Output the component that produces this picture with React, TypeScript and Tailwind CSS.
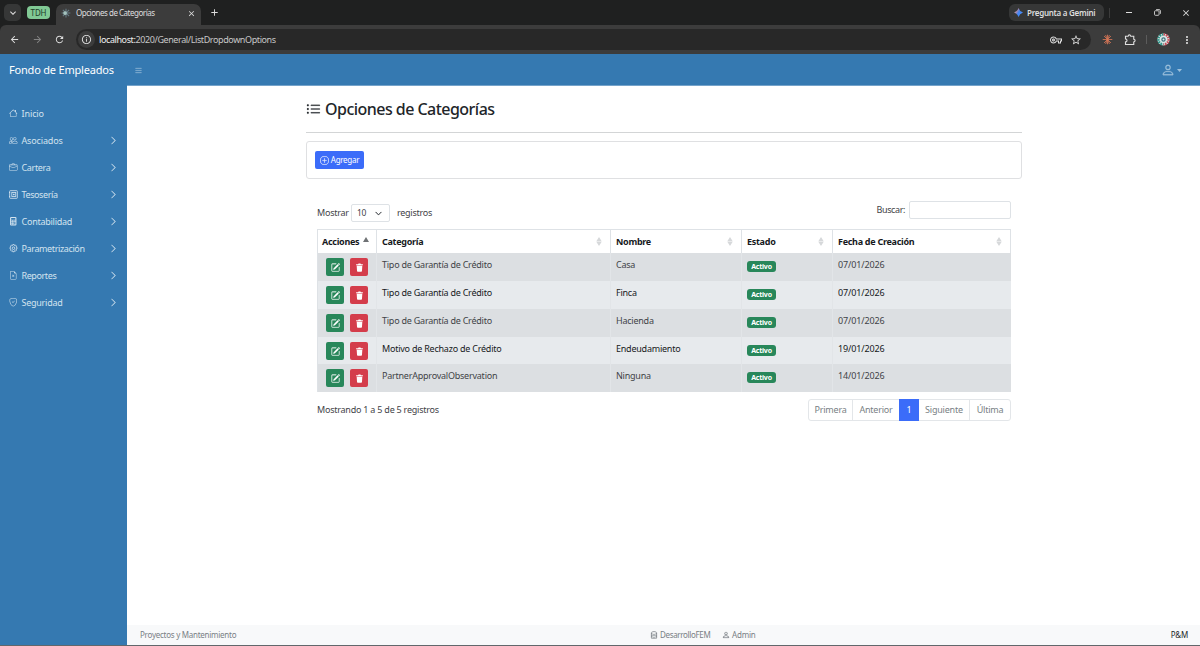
import {
  BsBriefcase,
  BsCalculatorFill,
  BsChevronDown,
  BsChevronRight,
  BsDatabase,
  BsFileEarmarkX,
  BsHouse,
  BsList,
  BsListUl,
  BsPencilSquare,
  BsPeople,
  BsPerson,
  BsPlusCircle,
  BsShieldCheck,
} from "react-icons/bs";
import {
  MdArrowBack,
  MdArrowForward,
  MdClose,
  MdInfoOutline,
  MdKeyboardArrowDown,
  MdMoreVert,
  MdOutlineVpnKey,
  MdRefresh,
  MdStarBorder,
  MdAdd,
} from "react-icons/md";

const SafeIcon = () => (
  <svg viewBox="0 0 16 16" className="size-[9px]" fill="none" stroke="currentColor" strokeWidth="1.5">
    <rect x="1.2" y="1.2" width="13.6" height="13.6" rx="1" />
    <rect x="5" y="4.5" width="7" height="7" />
    <path d="M0 4.5h2M0 11.5h2M8.5 6.5v3M7 8h3" />
  </svg>
);

const GearIcon = () => (
  <svg viewBox="0 0 16 16" className="size-[9px]" fill="none" stroke="currentColor" strokeWidth="1.5">
    <path d="M6.700 1h2.600l.5 1.700 1.700-.8 1.800 1.800-.8 1.700 1.700.6v2.600l-1.700.6.8 1.700-1.800 1.800-1.700-.8-.5 1.900H6.700l-.5-1.900-1.700.8-1.800-1.800.8-1.700L1.800 8.600V6l1.700-.6-.8-1.700 1.800-1.800 1.700.8z" />
    <circle cx="8" cy="7.500" r="2.300" />
  </svg>
);

const TrashIcon = () => (
  <svg viewBox="0 0 16 16" className="size-[9px]" fill="currentColor">
    <path d="M2 2h3.500l.8-1.200h3.400l.8 1.200H14v2H2zM3 5h10l-.6 9.200q-.1 1.300-1.400 1.300H5q-1.300 0-1.400-1.300z" />
  </svg>
);

const menu = [
  { label: "Inicio", icon: <BsHouse />, tracking: "tracking-[-0.1px]", leaf: true },
  { label: "Asociados", icon: <BsPeople />, tracking: "tracking-[-0.15px]" },
  { label: "Cartera", icon: <BsBriefcase />, tracking: "tracking-[-0.35px]" },
  { label: "Tesosería", icon: <SafeIcon />, tracking: "tracking-[-0.4px]" },
  { label: "Contabilidad", icon: <BsCalculatorFill />, tracking: "tracking-[-0.25px]" },
  { label: "Parametrización", icon: <GearIcon />, tracking: "tracking-[-0.38px]" },
  { label: "Reportes", icon: <BsFileEarmarkX />, tracking: "tracking-[-0.4px]" },
  { label: "Seguridad", icon: <BsShieldCheck />, tracking: "tracking-[-0.25px]" },
];

const rows = [
  { category: "Tipo de Garantía de Crédito", name: "Casa", date: "07/01/2026", style: "h-[28px] bg-[#dcdfe2] text-[#3f4347]" },
  { category: "Tipo de Garantía de Crédito", name: "Finca", date: "07/01/2026", style: "h-[28px] bg-[#e7eaed] text-[#16191c]" },
  { category: "Tipo de Garantía de Crédito", name: "Hacienda", date: "07/01/2026", style: "h-[28px] bg-[#dcdfe2] text-[#3f4347]" },
  { category: "Motivo de Rechazo de Crédito", name: "Endeudamiento", date: "19/01/2026", style: "h-[27px] bg-[#e7eaed] text-[#16191c]" },
  { category: "PartnerApprovalObservation", name: "Ninguna", date: "14/01/2026", style: "h-[28px] bg-[#dcdfe2] text-[#3f4347]" },
];

const columns = "grid grid-cols-[59px_234px_131px_91px_178px]";

function BrowserBar() {
  return (
    <div className="h-[54px] shrink-0 bg-[#1f2020] text-[#dedede]">
      <div className="flex h-[25px] items-center">
        <div className="ml-1 flex size-[17px] items-center justify-center rounded-[5px] bg-[#363737]">
          <MdKeyboardArrowDown className="size-[12px]" />
        </div>
        <div className="ml-[6px] flex h-[13px] w-[23px] items-center justify-center rounded-[4px] bg-[#81c995] text-[8px] tracking-[-0.1px] text-[#20402a]">
          TDH
        </div>
        <div className="ml-[6px] flex h-[21px] w-[145px] items-center self-end rounded-t-[7px] bg-[#3c3c3c] pb-[3px] pl-[5px]">
          <svg viewBox="0 0 16 16" className="size-[10px]" stroke="#657b84" strokeWidth="1.7">
            <path d="M8 1v14M1 8h14M3 3l10 10M13 3 3 13" />
            <circle cx="6.500" cy="8" r="3" fill="#a4c2bd" stroke="none" />
          </svg>
          <span className="ml-[5px] w-[100px] whitespace-nowrap text-[8px] tracking-[-0.48px]">Opciones de Categorías</span>
          <MdClose className="ml-[11px] size-[9px]" />
        </div>
        <MdAdd className="ml-[8px] size-[11px]" />
        <div className="ml-auto flex h-[17px] w-[95px] items-center rounded-[6px] bg-[#363737] pl-[5px] text-[8px] font-semibold">
          <svg viewBox="0 0 16 16" className="mr-[4px] size-[9px]">
            <defs>
              <linearGradient id="spark" x1="0" y1="0" x2="1" y2="0.6">
                <stop offset="0" stopColor="#63a772" />
                <stop offset="0.35" stopColor="#b68ba4" />
                <stop offset="0.6" stopColor="#4285f4" />
                <stop offset="1" stopColor="#4c8df6" />
              </linearGradient>
            </defs>
            <path fill="url(#spark)" d="M8 0q1.800 6.200 8 8-6.200 1.800-8 8-1.800-6.200-8-8 6.200-1.800 8-8" />
          </svg>
          <span className="whitespace-nowrap tracking-[-0.26px]">Pregunta a Gemini</span>
        </div>
        <div className="ml-[5px] h-[10px] w-px bg-[#3c3c3c]" />
        <div className="ml-[16px] h-px w-[6px] bg-[#dedede]" />
        <svg viewBox="0 0 8 8" className="ml-[22px] size-[7px]" fill="none" stroke="currentColor">
          <rect x="0.600" y="2" width="5.200" height="5.200" rx="1" />
          <path d="M2.400.7h3.400q1.500 0 1.500 1.500v3.300" />
        </svg>
        <MdClose className="ml-[20px] mr-[9px] size-[10px]" />
      </div>
      <div className="flex h-[29px] items-center rounded-t-[6px] bg-[#3c3c3c]">
        <MdArrowBack className="ml-[9px] size-[11px]" />
        <MdArrowForward className="ml-[12px] size-[11px] text-[#838383]" />
        <MdRefresh className="ml-[11px] size-[11px]" />
        <div className="ml-[11px] flex h-[21px] w-[1015px] items-center rounded-full bg-[#282828] pl-[2px]">
          <div className="flex size-[17px] items-center justify-center rounded-full bg-[#3c3c3c]">
            <MdInfoOutline className="size-[11px]" />
          </div>
          <span className="ml-[4px] whitespace-nowrap text-[9px] tracking-[-0.4px] text-[#c7c7c7]">
            <span className="text-[#f0f0f0]">localhost:</span>2020/General/ListDropdownOptions
          </span>
          <MdOutlineVpnKey className="ml-auto size-[12px]" />
          <MdStarBorder className="ml-[8px] mr-[9px] size-[12px]" />
        </div>
        <svg viewBox="0 0 16 16" className="ml-[11px] size-[11px]" stroke="#d97757" strokeWidth="1.200">
          <path d="M8 1v14M1 8h14M3 3l10 10M13 3 3 13M5.200 1.500l5.600 13M10.800 1.500l-5.600 13" />
        </svg>
        <svg viewBox="0 0 16 16" className="ml-[11px] size-[12px]" fill="none" stroke="currentColor" strokeWidth="1.500">
          <path d="M2 3h3.500q.2-1.800 1.700-1.800T9 3h4v4q1.800.2 1.800 1.800T13 10.600V14H2v-3.500q2-.3 2-2t-2-2z" />
        </svg>
        <div className="ml-[10px] h-[9px] w-px bg-[#5c5c5c]" />
        <svg viewBox="0 0 16 16" className="ml-[10px] size-[13px]" fill="none">
          <circle cx="8" cy="8" r="7.500" fill="#dce7e6" />
          <path d="M8 1.800a6.200 6.200 0 0 0 0 12.400" stroke="#2c9488" strokeWidth="3" strokeDasharray="2 1" />
          <path d="M8 1.800a6.200 6.200 0 0 1 0 12.400" stroke="#c64d58" strokeWidth="3" strokeDasharray="2 1" />
          <circle cx="8" cy="8" r="2" stroke="#3c7380" strokeWidth="1.500" />
        </svg>
        <MdMoreVert className="ml-[11px] size-[12px]" />
      </div>
    </div>
  );
}

function Sidebar() {
  return (
    <nav className="w-[127px] shrink-0 bg-[#3579b1] pt-[15px] text-[#d3e3ef]">
      {menu.map((item) => (
        <div key={item.label} className="flex h-[27px] items-center px-[9px] text-[9px]">
          <span className="flex w-[12.500px] stroke-[0.4] text-[8.500px]">{item.icon}</span>
          <span className={`whitespace-nowrap ${item.tracking}`}>{item.label}</span>
          {!item.leaf && <BsChevronRight className="ml-auto size-[9px] stroke-[0.5]" />}
        </div>
      ))}
    </nav>
  );
}

function SortMark() {
  return (
    <svg viewBox="0 0 6 10" className="ml-auto mr-[8px] h-[9px] w-[6px]" fill="#d6d8da">
      <path d="M3 0l3 4.600H0zM3 10l3-4.600H0z" />
    </svg>
  );
}

function HeaderCell({ label, first }: { label: string; first?: boolean }) {
  return (
    <div className="flex items-center border-r border-[#dee2e6] pl-[5px] tracking-[-0.28px] first:pl-[4px]">
      {label}
      {first ? (
        <svg viewBox="0 0 6 5" className="mb-[4px] ml-[4px] h-[5px] w-[6px]" fill="#6f7275">
          <path d="M3 0l3 5H0z" />
        </svg>
      ) : (
        <SortMark />
      )}
    </div>
  );
}

function Table() {
  return (
    <div className="mt-[6px] w-[694px] border-l border-[#dee2e6]">
      <div className={`${columns} h-[24px] border-t border-[#dee2e6] text-[9px] font-bold text-[#16191c]`}>
        <HeaderCell label="Acciones" first />
        <HeaderCell label="Categoría" />
        <HeaderCell label="Nombre" />
        <HeaderCell label="Estado" />
        <HeaderCell label="Fecha de Creación" />
      </div>
      {rows.map((row, i) => (
        <div key={i} className={`${columns} ${row.style} text-[9px] leading-[13px] tracking-[-0.23px]`}>
          <div className="flex gap-[6px] border-r border-[#e2e5e8] pl-[8px] pt-[5px] text-white">
            <span className="flex size-[18px] items-center justify-center rounded-[2px] bg-[#28875a]">
              <BsPencilSquare className="size-[9px] stroke-[0.3]" />
            </span>
            <span className="flex size-[18px] items-center justify-center rounded-[2px] bg-[#d43d4b]">
              <TrashIcon />
            </span>
          </div>
          <div className="border-r border-[#e2e5e8] pl-[5px] pt-[5px]">{row.category}</div>
          <div className="border-r border-[#e2e5e8] pl-[5px] pt-[5px]">{row.name}</div>
          <div className="border-r border-[#e2e5e8] pl-[5px] pt-[8px]">
            <span className="flex h-[11px] w-[29px] items-center justify-center rounded-[3px] bg-[#28875a] text-[7px] font-bold text-white">
              Activo
            </span>
          </div>
          <div className="pl-[5px] pt-[5px] tracking-[-0.15px]">{row.date}</div>
        </div>
      ))}
    </div>
  );
}

function Pagination() {
  return (
    <div className="flex h-[22px] rounded-[3px] border border-[#e3e6e9] text-[9px] leading-[20px] tracking-[-0.2px] text-[#797f85]">
      <span className="w-[44px] border-r border-[#e3e6e9] text-center">Primera</span>
      <span className="w-[46px] text-center">Anterior</span>
      <span className="-my-px w-[20px] bg-[#3b6cf9] text-center leading-[22px] text-white">1</span>
      <span className="w-[51px] border-r border-[#e3e6e9] text-center">Siguiente</span>
      <span className="w-[40px] text-center">Última</span>
    </div>
  );
}

export default function App() {
  return (
    <div className="flex h-[646px] w-[1200px] flex-col overflow-hidden bg-white font-['Noto_Sans',sans-serif]">
      <BrowserBar />
      <header className="flex h-[31px] shrink-0 items-center bg-[#3579b1] pb-px text-[#9dc0db]">
        <span className="w-[126px] whitespace-nowrap pl-[9px] pt-[3px] text-[11px] tracking-[-0.2px] text-white">
          Fondo de Empleados
        </span>
        <BsList className="ml-[8px] mt-[2px] size-[9px] stroke-[0.4]" />
        <BsPerson className="ml-auto mt-[2px] size-[14px] stroke-[0.3]" />
        <svg viewBox="0 0 5 3" className="ml-[2px] mr-[18px] mt-[3px] h-[3px] w-[5px]" fill="currentColor">
          <path d="M0 0h5L2.500 3z" />
        </svg>
      </header>

      <div className="flex min-h-0 flex-1">
        <Sidebar />
        <div className="flex flex-1 flex-col border-t border-[#75a3ca]">
          <main className="ml-[179px] w-[716px] flex-1 text-[#3f4347]">
            <div className="flex h-[47px] items-center border-b border-[#d3d5d6] text-[#212529]">
              <BsListUl className="size-[15px] stroke-[0.2]" />
              <h1 className="ml-[4px] whitespace-nowrap text-[16px] font-medium tracking-[-0.53px]">Opciones de Categorías</h1>
            </div>

            <div className="mt-[8px] flex h-[38px] items-center rounded-[3px] border border-[#dfe0e2] pl-[8px]">
              <button className="flex h-[18px] w-[49px] items-center justify-center gap-[2px] rounded-[2px] bg-[#3b6cf9] text-[8px] tracking-[-0.3px] text-white">
                <BsPlusCircle className="size-[9px] stroke-[0.3]" />
                Agregar
              </button>
            </div>

            <div className="px-[11px] pt-[22px] text-[9px] tracking-[-0.23px]">
              <div className="flex h-[22px] items-start">
                <div className="flex items-center pt-[3px]">
                  Mostrar
                  <span className="mx-[7px] ml-[2px] flex h-[18px] w-[39px] items-center justify-between rounded-[2px] border border-[#dee2e6] pl-[5px] pr-[7px] text-[8.500px]">
                    10
                    <BsChevronDown className="size-[7px] stroke-[1]" />
                  </span>
                  registros
                </div>
                <div className="ml-auto flex items-center tracking-[-0.4px]">
                  Buscar:
                  <input className="ml-[4px] h-[18px] w-[102px] rounded-[2px] border border-[#dee2e6]" />
                </div>
              </div>

              <Table />

              <div className="flex items-start justify-between pt-[7px]">
                <span className="leading-[22px]">Mostrando 1 a 5 de 5 registros</span>
                <Pagination />
              </div>
            </div>
          </main>

          <footer className="flex h-[20px] shrink-0 items-center bg-[#f8f9fa] pl-[13px] pr-[12px] text-[8px] text-[#797f85]">
            <span className="w-[510px] tracking-[-0.26px]">Proyectos y Mantenimiento</span>
            <BsDatabase className="size-[8px] stroke-[0.4]" />
            <span className="ml-[2px] w-[62px] tracking-[-0.34px]">DesarrolloFEM</span>
            <BsPerson className="size-[8px] stroke-[0.4]" />
            <span className="ml-[2px] tracking-[-0.2px]">Admin</span>
            <span className="ml-auto text-[#212529] tracking-[-0.2px]">P&amp;M</span>
          </footer>
        </div>
      </div>
      <div className="h-px shrink-0 bg-[#62676b]" />
    </div>
  );
}
